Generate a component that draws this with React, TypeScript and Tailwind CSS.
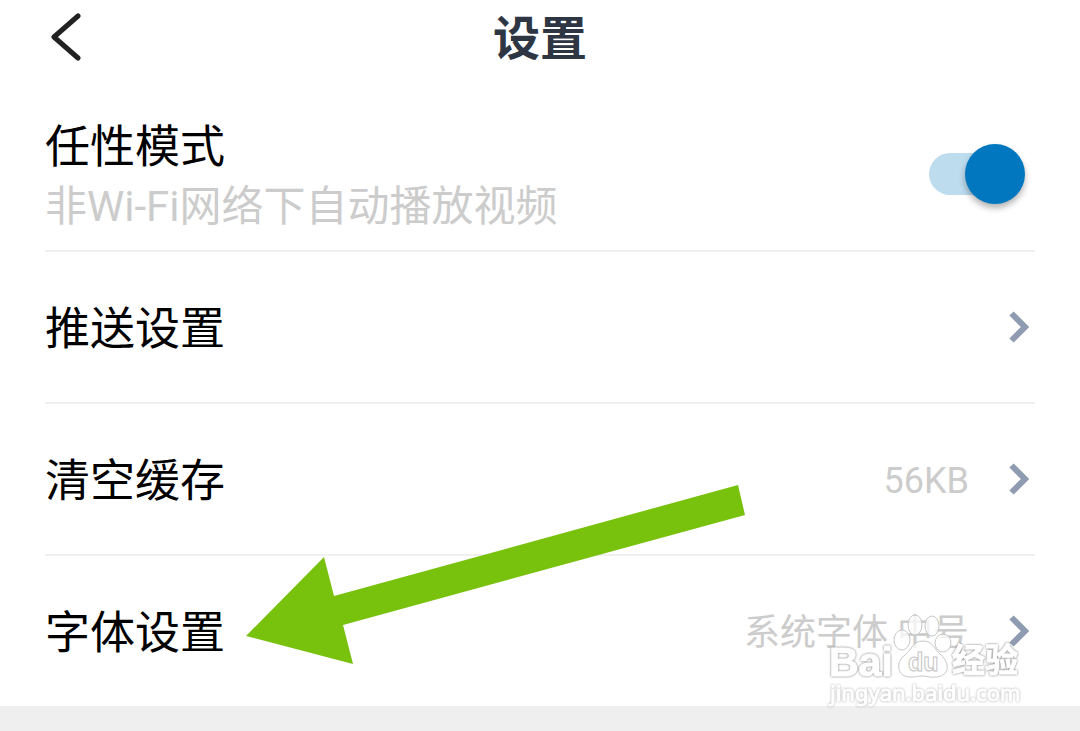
import { useState } from "react";

type SettingRowProps = {
  label: string;
  value?: string;
};

function Chevron() {
  return (
    <svg
      viewBox="0 0 20 32"
      className="h-8 w-5 shrink-0"
      fill="none"
      stroke="#8f9bb0"
      strokeWidth="6"
      aria-hidden="true"
    >
      <path d="M2.5 2.5L16 16L2.5 29.5" />
    </svg>
  );
}

function SettingRow({ label, value }: SettingRowProps) {
  return (
    <button
      type="button"
      className="flex w-full items-center justify-between py-[42px] pr-1.5 text-left"
    >
      <span className="pt-1.5 text-[45px] leading-[60px] text-black">
        {label}
      </span>
      <span className="flex items-center gap-10">
        {value && (
          <span className="pt-1 text-[36px] leading-[48px] text-[#cccccc]">
            {value}
          </span>
        )}
        <Chevron />
      </span>
    </button>
  );
}

function AutoPlayRow() {
  const [enabled, setEnabled] = useState(true);

  return (
    <label className="flex cursor-pointer items-center justify-between pt-9 pr-2.5 pb-3.5">
      <span className="flex flex-col pt-1.5">
        <span className="text-[45px] leading-[60px] text-black">任性模式</span>
        <span className="text-[42px] leading-[58px] text-[#cccccc]">
          非Wi-Fi网络下自动播放视频
        </span>
      </span>
      <input
        type="checkbox"
        role="switch"
        checked={enabled}
        onChange={(e) => setEnabled(e.target.checked)}
        className="peer sr-only"
      />
      <span className="flex h-[42px] w-24 shrink-0 items-center rounded-full bg-gradient-to-r from-[#bddcee] from-90% to-transparent to-90% peer-checked:justify-end">
        <span className="size-[60px] rounded-full bg-[#0077be] shadow-[0_4px_6px_rgba(0,0,0,0.3)]" />
      </span>
    </label>
  );
}

function Arrow() {
  return (
    <svg
      viewBox="0 0 500 180"
      className="pointer-events-none absolute top-[485px] left-[246px] h-[180px] w-[500px]"
      aria-hidden="true"
    >
      <polygon
        points="0,151 78,72 88,111 492,0 499,30 97,140 107,179"
        fill="#78c10c"
      />
    </svg>
  );
}

function Watermark() {
  return (
    <svg
      viewBox="0 0 200 100"
      className="pointer-events-none absolute right-[55px] bottom-0 h-[100px] w-[200px] overflow-visible"
      fill="#ffffff"
      aria-hidden="true"
    >
      <g stroke="#c8c8c8" fillOpacity="0.75">
        <ellipse cx="77" cy="34" rx="8" ry="10" />
        <ellipse cx="90" cy="19" rx="7" ry="10" />
        <ellipse cx="107" cy="20" rx="7" ry="10" />
        <ellipse cx="118" cy="37" rx="8" ry="9" />
        <path d="M98 35C88 35 87 43 80 49C70 56 72 71 85 71C92 71 94 70 98 70C102 70 105 72 111 71C125 70 125 57 116 49C109 43 108 35 98 35Z" />
      </g>
      <g
        stroke="#ffffff"
        strokeWidth="1"
        className="[filter:drop-shadow(0_0_1px_#777777)]"
      >
        <text
          x="4"
          y="70"
          fontSize="41"
          fontWeight="bold"
          fontFamily="'Liberation Sans', sans-serif"
        >
          Bai
        </text>
        <text
          x="127"
          y="66"
          fontSize="33"
          fontWeight="bold"
          fontFamily="'Noto Sans CJK SC', sans-serif"
        >
          经验
        </text>
      </g>
      <text
        x="5"
        y="95"
        fontSize="22"
        stroke="#ffffff"
        strokeWidth="1"
        className="[filter:drop-shadow(0_0_1px_#aaaaaa)]"
        fontFamily="'Noto Sans', sans-serif"
      >
        jingyan.baidu.com
      </text>
      <text
        x="83"
        y="65"
        fontSize="25"
        fontWeight="bold"
        stroke="#c4c4c4"
        fontFamily="'Liberation Sans', sans-serif"
      >
        du
      </text>
    </svg>
  );
}

export default function App() {
  return (
    <div className="relative flex min-h-screen flex-col bg-[#efefef] font-[Roboto,'Noto_Sans_CJK_SC',sans-serif]">
      <div className="relative bg-white">
        <header className="grid grid-cols-[1fr_auto_1fr] items-center px-[45px] py-2">
          <button type="button" aria-label="返回" className="w-10">
            <svg
              viewBox="0 0 40 50"
              className="h-[50px] w-10"
              fill="none"
              stroke="#222222"
              strokeWidth="5"
              strokeLinecap="round"
              strokeLinejoin="round"
            >
              <path d="M33 3L9 24L33 45" />
            </svg>
          </button>
          <h1 className="pt-0.5 text-[47px] leading-[58px] font-bold text-[#2e3643]">
            设置
          </h1>
        </header>
        <main className="divide-y-2 divide-[#f0f0f0] px-[45px]">
          <AutoPlayRow />
          <SettingRow label="推送设置" />
          <SettingRow label="清空缓存" value="56KB" />
          <SettingRow label="字体设置" value="系统字体 中号" />
        </main>
        <Watermark />
      </div>
      <Arrow />
    </div>
  );
}
